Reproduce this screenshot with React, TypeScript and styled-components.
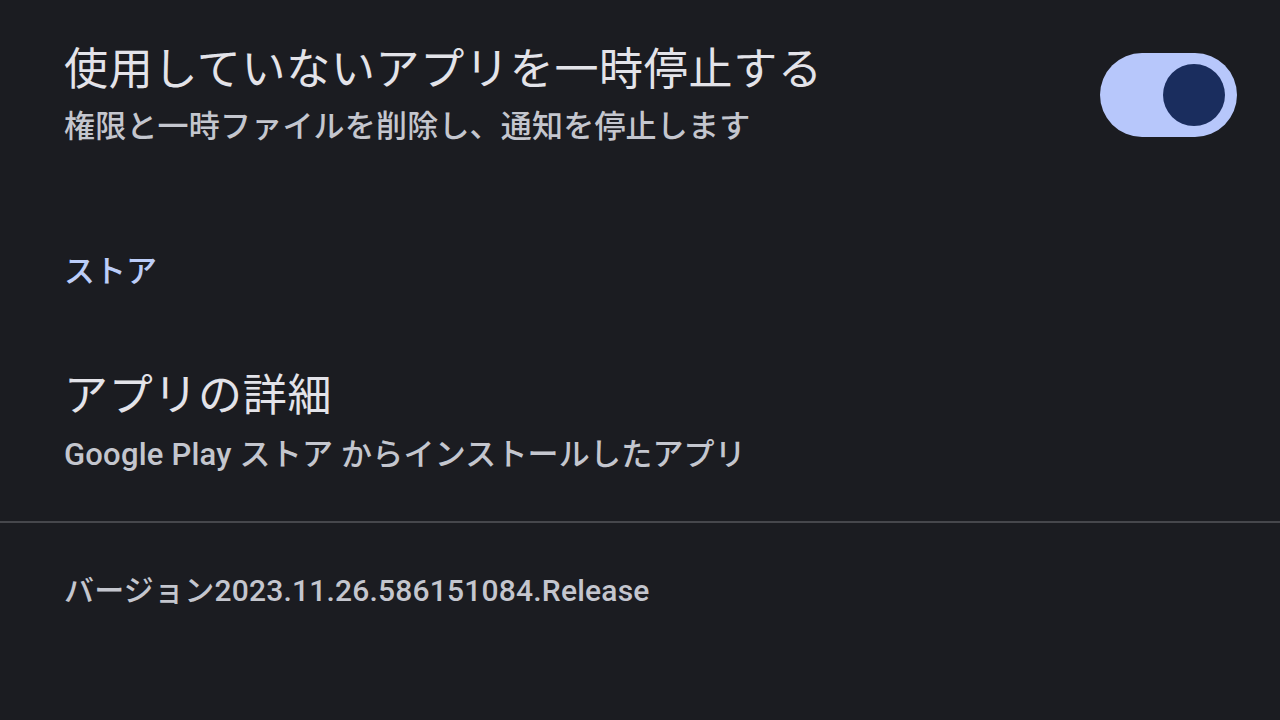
import React from 'react';
import styled, { createGlobalStyle } from 'styled-components';

const GlobalStyle = createGlobalStyle`
  html, body {
    margin: 0;
    padding: 0;
    background: #1b1c21;
  }
  body {
    font-family: "Roboto", "Noto Sans CJK JP", sans-serif;
    -webkit-font-smoothing: antialiased;
  }
`;

const Page = styled.div`
  width: 1280px;
  height: 720px;
  background: #1b1c21;
  padding-top: 42px;
  box-sizing: border-box;
  display: flex;
  flex-direction: column;
  overflow: hidden;
`;

const SettingRow = styled.div`
  display: flex;
  align-items: center;
  justify-content: space-between;
  padding: 0 43px 0 64px;
`;

const TextBlock = styled.div<{ $gap?: number }>`
  display: flex;
  flex-direction: column;
  gap: ${(p) => p.$gap ?? 9}px;
`;

const Title = styled.div`
  font-size: 44px;
  line-height: 56px;
  letter-spacing: 0.7px;
  color: #e3e3e9;
  font-weight: 400;
`;

const Summary = styled.div`
  font-size: 31px;
  line-height: 40px;
  letter-spacing: 0.2px;
  color: #c4c6ce;
  font-weight: 500;
`;

const SectionHeader = styled.div`
  padding: 0 64px;
  margin-top: 105px;
  margin-bottom: 76px;
  font-size: 31px;
  line-height: 40px;
  font-weight: 500;
  color: #bccdf8;
`;

const Divider = styled.hr`
  margin: 46px 0 48px;
  border: none;
  height: 2px;
  background: #46474c;
`;

const Footer = styled.div`
  padding: 0 64px;
  font-size: 30px;
  line-height: 40px;
  letter-spacing: 0.2px;
  font-weight: 500;
  color: #c4c6ce;
`;

const Track = styled.button<{ $on: boolean }>`
  width: 137px;
  height: 84px;
  border-radius: 42px;
  border: none;
  padding: 0 12px;
  display: flex;
  align-items: center;
  justify-content: ${(p) => (p.$on ? 'flex-end' : 'flex-start')};
  background: ${(p) => (p.$on ? '#b7c7fb' : '#44464e')};
  cursor: pointer;
  flex-shrink: 0;
`;

const Thumb = styled.span`
  width: 62px;
  height: 62px;
  border-radius: 50%;
  background: #1a2d5e;
`;

const Toggle = ({ on }: { on: boolean }) => (
  <Track $on={on} aria-pressed={on}>
    <Thumb />
  </Track>
);

const App = () => {
  return (
    <>
      <GlobalStyle />
      <Page>
        <SettingRow>
          <TextBlock>
            <Title>使用していないアプリを一時停止する</Title>
            <Summary>権限と一時ファイルを削除し、通知を停止します</Summary>
          </TextBlock>
          <Toggle on />
        </SettingRow>

        <SectionHeader>ストア</SectionHeader>

        <SettingRow>
          <TextBlock $gap={11}>
            <Title>アプリの詳細</Title>
            <Summary>Google Play ストア からインストールしたアプリ</Summary>
          </TextBlock>
        </SettingRow>

        <Divider />

        <Footer>バージョン2023.11.26.586151084.Release</Footer>
      </Page>
    </>
  );
};

export default App;
